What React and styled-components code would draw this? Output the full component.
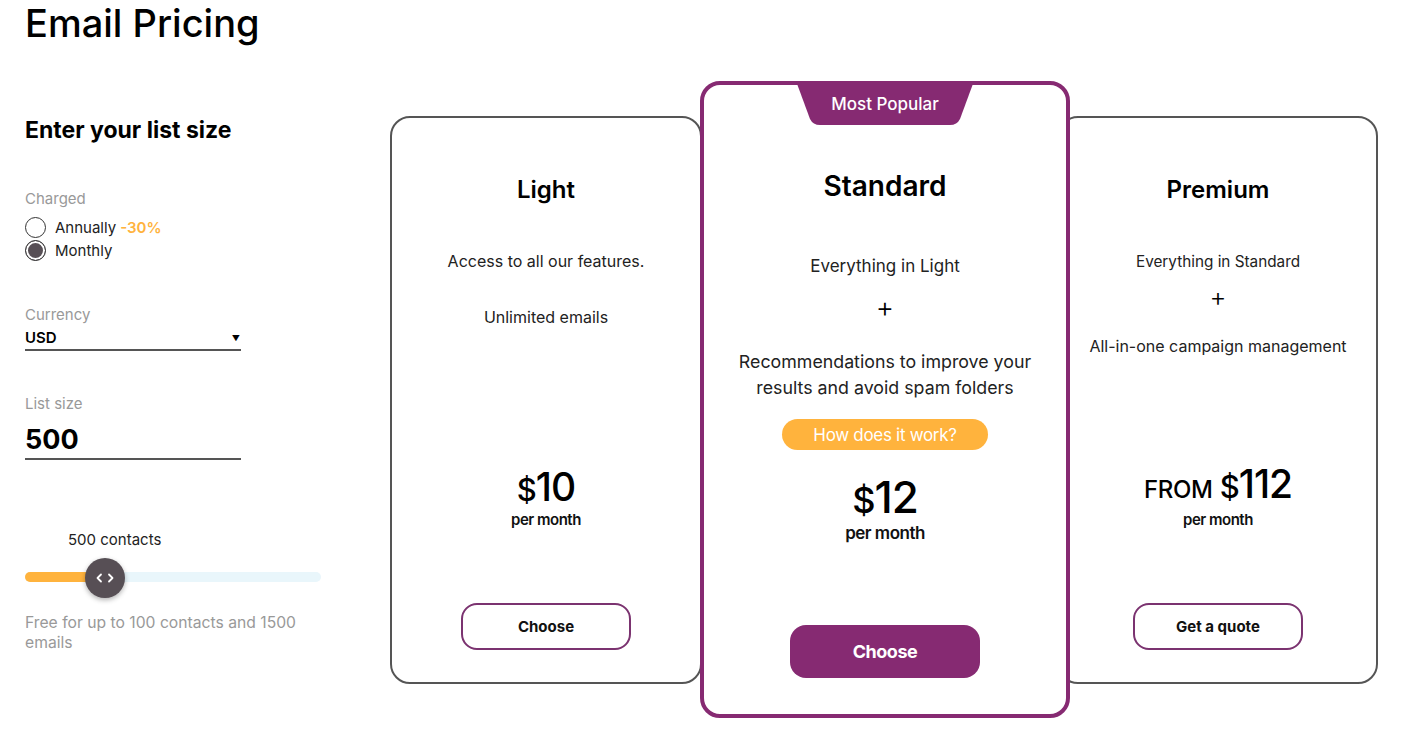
import styled, { createGlobalStyle } from "styled-components";

const GlobalStyle = createGlobalStyle`
  * { box-sizing: border-box; }
  body {
    margin: 0;
    background: #fff;
    font-family: Inter, "Noto Sans", Arial, sans-serif;
    color: #1c1c1c;
  }
`;

const purple = "#862a72";
const orange = "#ffb33d";

const Page = styled.div`
  padding-left: 25px;
`;

const Title = styled.h1`
  margin: 0;
  font-size: 38px;
  line-height: 46px;
  font-weight: 500;
  color: #000;
`;

const Main = styled.div`
  display: flex;
  margin-top: 35px;
`;

const Side = styled.div`
  width: 296px;
  padding-top: 35px;
  display: flex;
  flex-direction: column;
`;

const SideTitle = styled.h2`
  margin: 0;
  font-size: 23px;
  line-height: 28px;
  font-weight: 700;
  color: #000;
`;

const Label = styled.div`
  margin-top: ${(p) => p.$mt}px;
  font-size: 15px;
  line-height: 20px;
  color: #999;
`;

const RadioGroup = styled.div`
  margin-top: 7px;
  display: flex;
  flex-direction: column;
`;

const RadioRow = styled.label`
  display: flex;
  align-items: center;
  gap: 9px;
  height: 23px;
  font-size: 15px;
  color: #222;
`;

const RadioDot = styled.span`
  width: 21px;
  height: 21px;
  border-radius: 50%;
  border: 1px solid #333;
  background: ${(p) => (p.$on ? "#574f55" : "#fff")};
  box-shadow: ${(p) => (p.$on ? "inset 0 0 0 2px #fff" : "none")};
  flex: none;
`;

const Discount = styled.span`
  color: ${orange};
  font-weight: 600;
  margin-left: -5px;
`;

const SelectBox = styled.div`
  width: 216px;
  margin-top: 3px;
  display: flex;
  justify-content: space-between;
  align-items: center;
  font-size: 15px;
  line-height: 20px;
  font-weight: 600;
  color: #000;
  padding-bottom: 1px;
  border-bottom: 2px solid #555;
  span { font-size: 8px; padding-right: 1px; }
`;

const SizeInput = styled.div`
  width: 216px;
  margin-top: 10px;
  font-size: 27px;
  line-height: 32px;
  font-weight: 700;
  color: #000;
  padding-bottom: 2px;
  border-bottom: 2px solid #555;
`;

const Contacts = styled.div`
  margin-top: 70px;
  margin-left: 43px;
  font-size: 15px;
  line-height: 20px;
  color: #222;
`;

const Track = styled.div`
  position: relative;
  margin-top: 22px;
  height: 10px;
  border-radius: 5px;
  background: #e9f6fb;
`;

const Fill = styled.div`
  height: 100%;
  border-radius: 5px 0 0 5px;
  background: ${orange};
`;

const Thumb = styled.div`
  position: absolute;
  top: -14px;
  width: 40px;
  height: 40px;
  border-radius: 50%;
  background: #574f55;
  box-shadow: 0 2px 5px rgba(0, 0, 0, 0.3);
  display: flex;
  align-items: center;
  justify-content: center;
`;

const Note = styled.div`
  margin-top: 31px;
  font-size: 15.7px;
  line-height: 20px;
  color: #999;
`;

const Cards = styled.div`
  display: flex;
  align-items: center;
  margin-left: 69px;
`;

const Card = styled.div`
  position: relative;
  display: flex;
  flex-direction: column;
  align-items: center;
  text-align: center;
  background: #fff;
  width: ${(p) => p.$w}px;
  height: ${(p) => (p.$featured ? 637 : 568)}px;
  margin-left: ${(p) => p.$ml || 0}px;
  border: ${(p) => (p.$featured ? `4px solid ${purple}` : "2px solid #555")};
  border-radius: 20px;
  padding: ${(p) => (p.$featured ? "84px 0 36px" : "57px 0 32px")};
  z-index: ${(p) => (p.$featured ? 2 : 1)};
`;

const Ribbon = styled.div`
  position: absolute;
  top: -4px;
  left: 50%;
  transform: translateX(-50%);
  width: 178px;
  height: 44px;
  background: ${purple};
  clip-path: path("M0 0 H178 L164 38 Q161 44 154 44 H24 Q17 44 14 38 Z");
  color: #fff;
  font-size: 17px;
  font-weight: 500;
  line-height: 46px;
`;

const PlanName = styled.h3`
  margin: 0;
  font-size: ${(p) => (p.$big ? 28 : 24)}px;
  line-height: ${(p) => (p.$big ? 34 : 30)}px;
  font-weight: 600;
  color: #000;
`;

const Feature = styled.p`
  margin: ${(p) => p.$mt}px 0 0;
  font-size: ${(p) => p.$size || 16}px;
  line-height: ${(p) => (p.$size > 16 ? 26 : 20)}px;
  color: #222;
`;

const Plus = styled.div`
  margin-top: ${(p) => p.$mt}px;
  font-size: ${(p) => (p.$big ? 28 : 26)}px;
  line-height: ${(p) => (p.$big ? 30 : 26)}px;
  font-weight: 300;
  color: #000;
`;

const Pill = styled.button`
  margin-top: 18px;
  width: 206px;
  height: 31px;
  padding: 0;
  border: none;
  border-radius: 16px;
  background: ${orange};
  color: #fff;
  font-family: inherit;
  font-size: 17px;
  letter-spacing: -0.3px;
`;

const Price = styled.div`
  margin-top: ${(p) => (p.$auto ? "auto" : `${p.$mt}px`)};
  display: flex;
  align-items: baseline;
  justify-content: center;
  color: #000;
  font-size: ${(p) => (p.$big ? 44 : 39)}px;
  line-height: ${(p) => (p.$big ? 46 : 42)}px;
  font-weight: 500;
  letter-spacing: -1px;
`;

const Currency = styled.span`
  font-size: ${(p) => (p.$big ? 36 : 31)}px;
`;

const From = styled.span`
  font-size: 24px;
  letter-spacing: -0.3px;
  margin-right: 7px;
`;

const Period = styled.div`
  font-size: ${(p) => (p.$big ? 17 : 15)}px;
  line-height: ${(p) => (p.$big ? 20 : 18)}px;
  font-weight: 600;
  letter-spacing: -0.5px;
  color: #111;
`;

const ActionButton = styled.button`
  margin-top: ${(p) => (p.$solid ? 82 : 74)}px;
  width: ${(p) => (p.$solid ? 190 : 170)}px;
  height: ${(p) => (p.$solid ? 53 : 47)}px;
  border-radius: 16px;
  border: ${(p) => (p.$solid ? "none" : "2px solid #7b3370")};
  background: ${(p) => (p.$solid ? purple : "#fff")};
  color: ${(p) => (p.$solid ? "#fff" : "#111")};
  font-family: inherit;
  font-size: ${(p) => (p.$solid ? 18 : 15)}px;
  font-weight: 700;
  letter-spacing: ${(p) => (p.$solid ? "-0.5px" : "0")};
`;

function Arrows() {
  return (
    <svg width="18" height="10" viewBox="0 0 18 10" fill="none" stroke="#fff" strokeWidth="1.8" strokeLinecap="round" strokeLinejoin="round">
      <path d="M5 1.5 L1.5 5 L5 8.5" />
      <path d="M13 1.5 L16.5 5 L13 8.5" />
    </svg>
  );
}

export default function App() {
  return (
    <Page>
      <GlobalStyle />
      <Title>Email Pricing</Title>
      <Main>
        <Side>
          <SideTitle>Enter your list size</SideTitle>
          <Label $mt={45}>Charged</Label>
          <RadioGroup>
            <RadioRow>
              <RadioDot />
              Annually <Discount>-30%</Discount>
            </RadioRow>
            <RadioRow>
              <RadioDot $on />
              Monthly
            </RadioRow>
          </RadioGroup>
          <Label $mt={43}>Currency</Label>
          <SelectBox>
            USD <span>▼</span>
          </SelectBox>
          <Label $mt={43}>List size</Label>
          <SizeInput>500</SizeInput>
          <Contacts>500 contacts</Contacts>
          <Track>
            <Fill style={{ width: 80 }} />
            <Thumb style={{ left: 60 }}>
              <Arrows />
            </Thumb>
          </Track>
          <Note>Free for up to 100 contacts and 1500 emails</Note>
        </Side>

        <Cards>
          <Card $w={312}>
            <PlanName>Light</PlanName>
            <Feature $mt={46}>Access to all our features.</Feature>
            <Feature $mt={36}>Unlimited emails</Feature>
            <Price $auto>
              <Currency>$</Currency>10
            </Price>
            <Period>per month</Period>
            <ActionButton>Choose</ActionButton>
          </Card>

          <Card $w={370} $ml={-2} $featured>
            <Ribbon>Most Popular</Ribbon>
            <PlanName $big>Standard</PlanName>
            <Feature $size={17} $mt={50}>Everything in Light</Feature>
            <Plus $big $mt={13}>+</Plus>
            <Feature $size={17.8} $mt={27}>
              Recommendations to improve your
              <br />
              results and avoid spam folders
            </Feature>
            <Pill>How does it work?</Pill>
            <Price $big $mt={24}>
              <Currency $big>$</Currency>12
            </Price>
            <Period $big>per month</Period>
            <ActionButton $solid>Choose</ActionButton>
          </Card>

          <Card $w={320} $ml={-12}>
            <PlanName>Premium</PlanName>
            <Feature $size={15.3} $mt={47}>Everything in Standard</Feature>
            <Plus $mt={12}>+</Plus>
            <Feature $mt={26}>All-in-one campaign management</Feature>
            <Price $auto>
              <From>FROM</From>
              <Currency>$</Currency>112
            </Price>
            <Period>per month</Period>
            <ActionButton>Get a quote</ActionButton>
          </Card>
        </Cards>
      </Main>
    </Page>
  );
}
